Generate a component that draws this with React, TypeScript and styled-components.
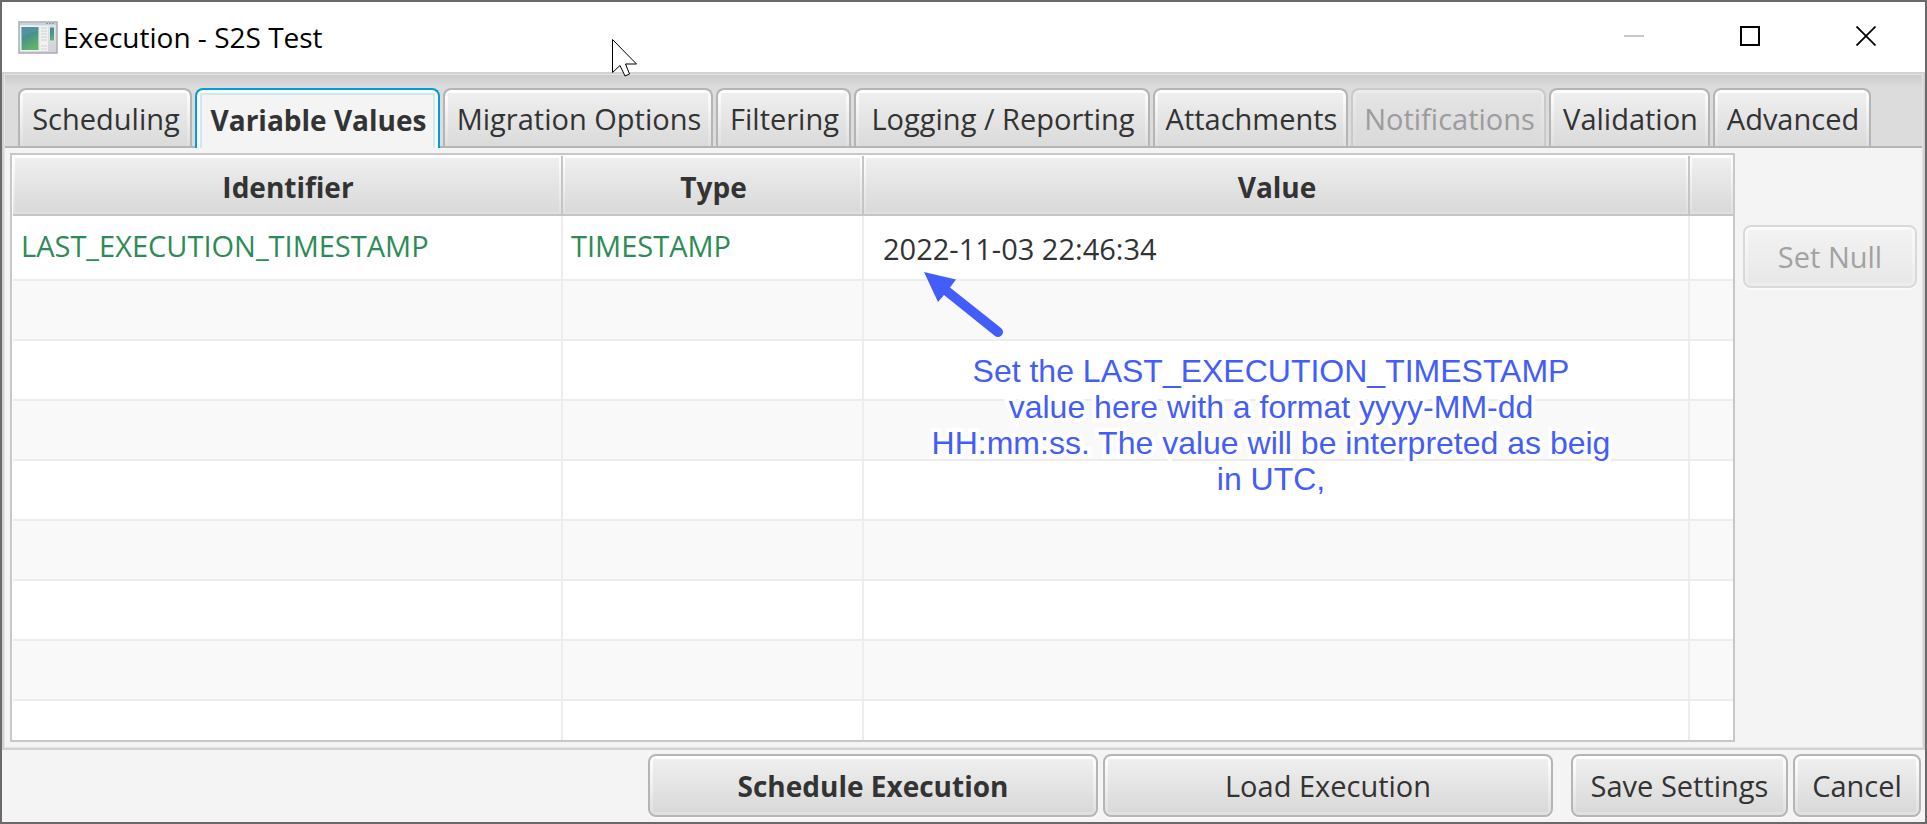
import React, { useState } from "react";
import styled, { createGlobalStyle, css } from "styled-components";

const GlobalStyle = createGlobalStyle`
  *, *::before, *::after { box-sizing: border-box; }
  body { margin: 0; }
  button, input { font: inherit; color: inherit; }
`;

const Window = styled.main`
  position: relative;
  display: flex;
  flex-direction: column;
  height: 100vh;
  border: 2px solid #6b6969;
  background: #f4f4f4;
  color: #333;
  font-family: "Open Sans", "Noto Sans", sans-serif;
  font-size: 29px;
  line-height: 36px;
  overflow: hidden;
`;

const TitleBar = styled.header`
  display: flex;
  flex: none;
  align-items: stretch;
  height: 70px;
  padding-right: 1px;
  background: #fff;
  color: #000;
`;

const TitleLabel = styled.div`
  display: flex;
  flex: 1;
  align-items: center;
  gap: 5px;
  padding-left: 16px;
`;

const Title = styled.h1`
  margin: 0;
  font-size: 28px;
  font-weight: 400;
`;

const WindowButton = styled.button`
  display: grid;
  place-items: center;
  width: 116px;
  padding: 0 0 2px;
  border: 0;
  background: none;
`;

const TabPane = styled.section`
  display: flex;
  flex: 1;
  flex-direction: column;
  min-height: 0;
  border: 2px solid #d2d2d2;
  box-shadow: inset 0 0 0 1px #e4e4e4;
  padding: 1px;
`;

const TabList = styled.div`
  display: flex;
  flex: none;
  align-items: flex-end;
  gap: 3px;
  height: 73px;
  padding: 0 13px;
  border-bottom: 2px solid #b5b5b5;
  background: linear-gradient(#cbcbcb, #dcdcdc 12px);
`;

const selectedTab = css`
  height: 60px;
  margin-bottom: -2px;
  padding-bottom: 0;
  border-color: #039ed3;
  background:
    linear-gradient(#f4f4f4, #f4f4f4) 5px 5px / calc(100% - 10px) 100% no-repeat padding-box,
    linear-gradient(#d2e8f0, #d2e8f0) 3px 3px / calc(100% - 6px) 100% no-repeat padding-box,
    #fafafa;
  font-size: 28px;
  font-weight: 700;
`;

const Tab = styled.button<{ $width: number }>`
  flex: 0 1 ${(p) => p.$width}px;
  height: 58px;
  padding: 2px 0 0 2px;
  border: 2px solid #b5b5b5;
  border-bottom: 0;
  border-radius: 8px 8px 0 0;
  background:
    linear-gradient(#efefef, #d9d9d9) 3px 3px / calc(100% - 6px) 100% no-repeat padding-box,
    linear-gradient(#fff, #dfdfdf) padding-box;
  white-space: nowrap;

  &[aria-selected="true"] { ${selectedTab} }
  &:disabled {
    border-color: #cacaca;
    background:
      linear-gradient(#e4e4e4, #d9d9d9) 3px 3px / calc(100% - 6px) 100% no-repeat padding-box,
      linear-gradient(#ebebeb, #dcdcdc) padding-box;
    color: #9c9c9c;
  }
`;

const TabContent = styled.div`
  display: flex;
  flex: 1;
  gap: 8px;
  min-height: 0;
  padding: 5px;
`;

const TableFrame = styled.div`
  flex: 1;
  min-width: 0;
  border: 2px solid #c8c8c8;
  padding: 1px 0 0 1px;
  background: #fff;
  overflow: hidden;
`;

const Table = styled.table`
  width: 100%;
  border-collapse: separate;
  border-spacing: 0;
  table-layout: fixed;
`;

const Column = styled.col<{ $width?: number }>`
  width: ${(p) => (p.$width ? `${p.$width}px` : "auto")};
`;

const HeaderCell = styled.th`
  height: 60px;
  padding: 4px 0 0 2px;
  border-right: 2px solid #c5c5c5;
  border-bottom: 2px solid #c5c5c5;
  background:
    linear-gradient(#efefef, #d9d9d9) 2px 2px / calc(100% - 4px) calc(100% - 4px) no-repeat padding-box,
    linear-gradient(#fff, #dfdfdf) padding-box;
  font-size: 28px;
  font-weight: 700;

  &:last-child { border-right: 0; }
`;

const Row = styled.tr`
  height: 60px;

  &:first-child { height: 65px; }
  &:nth-child(even) { background: #f9f9f9; }
`;

const Cell = styled.td`
  position: relative;
  padding: 0 8px 3px;
  border-right: 2px solid #ededed;
  border-bottom: 2px solid #ededed;
  color: #2e8b57;
  white-space: nowrap;

  &:last-child { border-right: 0; }
`;

const ValueCell = styled(Cell)`
  padding: 3px 19px 0;
  color: #333;
`;

const ValueInput = styled.input`
  display: block;
  width: 100%;
  padding: 0;
  border: 0;
  outline: 0;
  background: none;
`;

const Note = styled.aside`
  position: absolute;
  z-index: 1;
  top: 54px;
  left: 58px;
  width: 698px;
  color: #435dfb;
  font-family: "Liberation Sans", Arial, sans-serif;
  font-size: 32px;
  line-height: 36px;
  text-align: center;
  white-space: normal;
  pointer-events: none;
`;

const NoteArrow = styled.svg`
  display: block;
`;

const NoteText = styled.p`
  margin: 15px 0 0;
  -webkit-text-stroke: 8px #fff;
  paint-order: stroke fill;
  stroke-linejoin: round;
`;

const SideActions = styled.div`
  flex: none;
  padding-top: 72px;
`;

const Button = styled.button<{ $width: number; $strong?: boolean }>`
  width: ${(p) => p.$width}px;
  height: 63px;
  padding: 0;
  border: 2px solid #b5b5b5;
  border-radius: 8px;
  background:
    linear-gradient(#efefef, #d9d9d9) 3px 3px / calc(100% - 6px) calc(100% - 6px) no-repeat padding-box,
    linear-gradient(#fff, #dfdfdf) padding-box;
  box-shadow: 0 2px 0 #fafafa;
  font-size: ${(p) => (p.$strong ? 28 : 29)}px;
  font-weight: ${(p) => (p.$strong ? 700 : 400)};
  white-space: nowrap;

  &:disabled {
    border-color: #d9d9d9;
    background:
      linear-gradient(#f2f2f2, #e8e8e8) 3px 3px / calc(100% - 6px) calc(100% - 6px) no-repeat padding-box,
      linear-gradient(#fafafa, #ececec) padding-box;
    color: #a2a2a2;
  }
`;

const Footer = styled.footer`
  display: flex;
  flex: none;
  justify-content: flex-end;
  gap: 18px;
  padding: 4px 4px 5px;
`;

const ButtonGroup = styled.div`
  display: flex;
  gap: 5px;
`;

const Pointer = styled.svg`
  position: absolute;
  top: 36px;
  left: 609px;
  pointer-events: none;
`;

const tabs = [
  { label: "Scheduling", width: 174 },
  { label: "Variable Values", width: 245 },
  { label: "Migration Options", width: 270 },
  { label: "Filtering", width: 135 },
  { label: "Logging / Reporting", width: 296 },
  { label: "Attachments", width: 195 },
  { label: "Notifications", width: 195, disabled: true },
  { label: "Validation", width: 161 },
  { label: "Advanced", width: 158 },
];

const emptyRows = [1, 2, 3, 4, 5, 6, 7, 8];

function AppIcon() {
  return (
    <svg width="40" height="33" viewBox="0 0 40 33" aria-hidden="true">
      <defs>
        <linearGradient id="pane" x1="0" y1="0" x2="0.4" y2="1">
          <stop offset="0" stopColor="#4a7fa5" />
          <stop offset="0.5" stopColor="#479489" />
          <stop offset="1" stopColor="#63b06c" />
        </linearGradient>
        <linearGradient id="frame" x1="0" y1="0" x2="1" y2="1">
          <stop offset="0" stopColor="#eceef1" />
          <stop offset="1" stopColor="#ced1d6" />
        </linearGradient>
      </defs>
      <rect x="1" y="1" width="38" height="31" fill="url(#frame)" stroke="#a9adb3" strokeWidth="1.5" />
      <path d="M2 3h36" stroke="#c5d3df" strokeWidth="2" />
      <path d="M28 2.500h9" stroke="#8f9aa5" strokeDasharray="2 1" />
      <rect x="2.500" y="5" width="19" height="25" fill="#f4f5f6" />
      <rect x="3.500" y="6" width="17" height="23" fill="url(#pane)" />
      <path d="M3.500 17C8 12 14 11 20.500 10V6h-17z" fill="#6fa3bb" opacity="0.3" />
      <rect x="22" y="5" width="8" height="25" fill="#f1f1f2" />
      <path d="M23 7h6M23 10h6M23 13h6M23 16h6M23 19h6M23 25h6M23 28h6" stroke="#cfd0d2" />
      <rect x="31.500" y="6" width="5" height="14" fill="url(#pane)" stroke="#dfe4e6" />
    </svg>
  );
}

export default function App() {
  const [active, setActive] = useState("Variable Values");
  const [value, setValue] = useState("2022-11-03 22:46:34");

  return (
    <>
      <GlobalStyle />
      <Window>
        <TitleBar>
          <TitleLabel>
            <AppIcon />
            <Title>Execution - S2S Test</Title>
          </TitleLabel>
          <WindowButton aria-label="Minimize" disabled>
            <svg width="20" height="20"><path d="M0 10h20" stroke="#c8c8c8" strokeWidth="2" /></svg>
          </WindowButton>
          <WindowButton aria-label="Maximize">
            <svg width="20" height="20"><path d="M1 1h18v18H1z" fill="none" stroke="#000" strokeWidth="2" /></svg>
          </WindowButton>
          <WindowButton aria-label="Close">
            <svg width="20" height="20"><path d="M0.500 0.500l19 19M19.500 0.500l-19 19" stroke="#000" strokeWidth="1.800" /></svg>
          </WindowButton>
        </TitleBar>

        <TabPane>
          <TabList role="tablist">
            {tabs.map((tab) => (
              <Tab
                key={tab.label}
                role="tab"
                $width={tab.width}
                aria-selected={tab.label === active}
                disabled={tab.disabled}
                onClick={() => setActive(tab.label)}
              >
                {tab.label}
              </Tab>
            ))}
          </TabList>
          <TabContent role="tabpanel">
            <TableFrame>
              <Table>
                <colgroup>
                  <Column $width={550} />
                  <Column $width={301} />
                  <Column />
                  <Column $width={43} />
                </colgroup>
                <thead>
                  <tr>
                    <HeaderCell scope="col">Identifier</HeaderCell>
                    <HeaderCell scope="col">Type</HeaderCell>
                    <HeaderCell scope="col">Value</HeaderCell>
                    <HeaderCell />
                  </tr>
                </thead>
                <tbody>
                  <Row>
                    <Cell>LAST_EXECUTION_TIMESTAMP</Cell>
                    <Cell>TIMESTAMP</Cell>
                    <ValueCell>
                      <ValueInput aria-label="Value" value={value} onChange={(e) => setValue(e.target.value)} />
                      <Note>
                        <NoteArrow width="84" height="68" viewBox="0 0 84 68" aria-hidden="true">
                          <path d="M2 2L34 9.500L28 17.500L79 58A5 5 0 0 1 73 66L22 25L16 32z" fill="#435dfb" />
                        </NoteArrow>
                        <NoteText>
                          Set the LAST_EXECUTION_TIMESTAMP
                          <br />
                          value here with a format yyyy-MM-dd
                          <br />
                          HH:mm:ss. The value will be interpreted as beig
                          <br />
                          in UTC,
                        </NoteText>
                      </Note>
                    </ValueCell>
                    <Cell />
                  </Row>
                  {emptyRows.map((n) => (
                    <Row key={n}>
                      <Cell />
                      <Cell />
                      <Cell />
                      <Cell />
                    </Row>
                  ))}
                </tbody>
              </Table>
            </TableFrame>
            <SideActions>
              <Button $width={174} disabled>Set Null</Button>
            </SideActions>
          </TabContent>
        </TabPane>

        <Footer>
          <ButtonGroup>
            <Button $width={450} $strong>Schedule Execution</Button>
            <Button $width={450}>Load Execution</Button>
          </ButtonGroup>
          <ButtonGroup>
            <Button $width={217}>Save Settings</Button>
            <Button $width={128}>Cancel</Button>
          </ButtonGroup>
        </Footer>

        <Pointer width="30" height="42" viewBox="0 0 30 42" aria-hidden="true">
          <path d="M1.500 1.500V34.500L9 27.500L14 38L18.500 36L14.500 26H25.500z" fill="#fff" stroke="#000" />
        </Pointer>
      </Window>
    </>
  );
}
